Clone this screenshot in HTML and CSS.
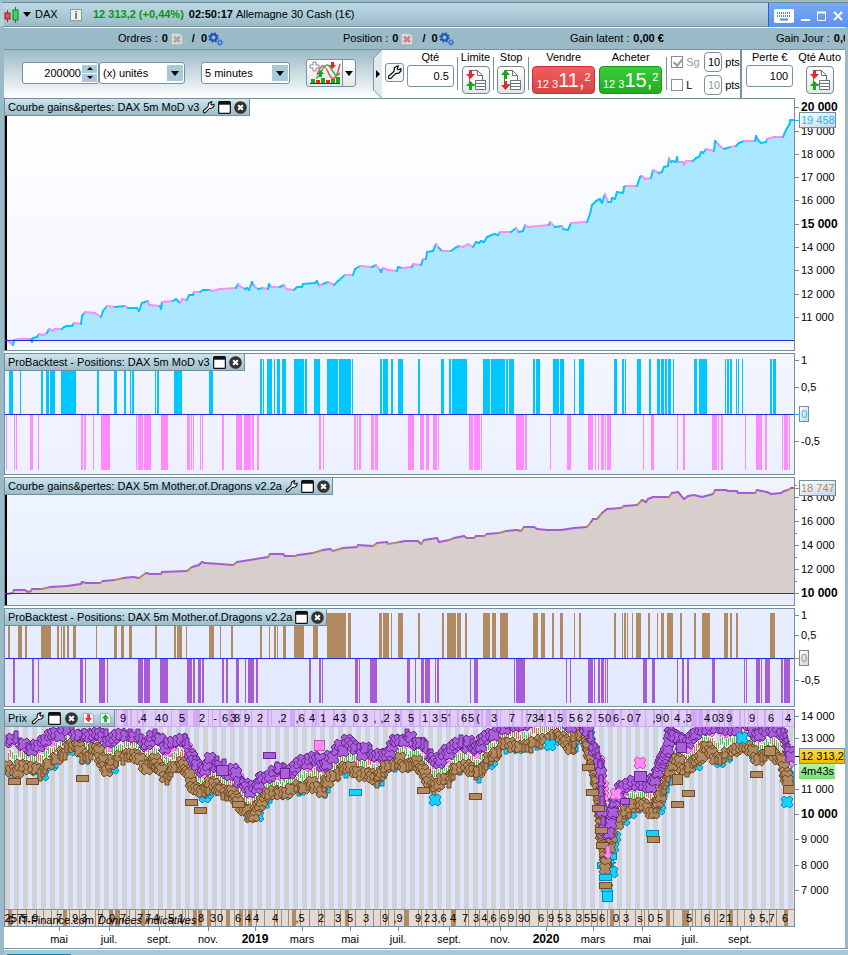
FILE: index.html
```html
<!DOCTYPE html>
<html lang="fr">
  <head>
    <meta charset="utf-8">
    <title>DAX - Allemagne 30 Cash (1€)</title>
    <link rel="stylesheet" href="styles.css">
  </head>
  <body>
    <!-- Shared icons -->
    <svg class="sprite" aria-hidden="true">
      <defs>
        <linearGradient id="tagFill" x1="0" y1="0" x2="1" y2="1">
          <stop offset="0" stop-color="#fff" />
          <stop offset="1" stop-color="#c5d3ee" />
        </linearGradient>
        <linearGradient id="priceFill" x1="0" y1="0" x2="0" y2="1">
          <stop offset="0" stop-color="#ffe03c" />
          <stop offset="1" stop-color="#f0b800" />
        </linearGradient>
        <linearGradient id="timeFill" x1="0" y1="0" x2="0" y2="1">
          <stop offset="0" stop-color="#b4f5ac" />
          <stop offset="1" stop-color="#78de78" />
        </linearGradient>
      </defs>
      <symbol id="wrench" viewBox="0 0 14 14">
        <path d="M1.5 10.5 6.5 6 7 2.5 9.5 1 10.5 1 9.5 3.5 10.5 4.5 13 3.5 13 5.500 11 7.500 8 8 3.500 12.500Q1 13.500 1.500 10.500Z" fill="#fff" stroke="#111" stroke-width="1.2" />
      </symbol>
      <symbol id="window" viewBox="0 0 14 14">
        <rect x="0.7" y="0.7" width="12.600" height="12.600" rx="1" fill="#fff" stroke="#111" stroke-width="1.3" />
        <path d="M1 1h12v3H1z" fill="#111" />
      </symbol>
      <symbol id="close" viewBox="0 0 14 14">
        <circle cx="7" cy="7" r="6.800" fill="#333" />
        <path d="M4.500 4.500l5 5M9.500 4.500l-5 5" stroke="#fff" stroke-width="2.200" />
      </symbol>
      <symbol id="sell" viewBox="0 0 14 14">
        <path d="M1.500 1.500h8l3 3v8h-11z" fill="#f4f6f8" stroke="#9aa8b2" />
        <path d="M5.500 2.500h3v4h2.500L7 11 3 6.500h2.500z" fill="#e33" />
      </symbol>
      <symbol id="buy" viewBox="0 0 14 14">
        <path d="M1.500 1.500h8l3 3v8h-11z" fill="#f4f6f8" stroke="#9aa8b2" />
        <path d="M5.500 11h3V7H11L7 2.500 3 7h2.500z" fill="#1cb11c" />
      </symbol>
      <symbol id="gears" viewBox="0 0 16 14">
        <g fill="none">
          <circle cx="5.500" cy="5.500" r="3" stroke="#1d55b8" stroke-width="2" />
          <circle cx="5.500" cy="5.500" r="4.500" stroke="#1d55b8" stroke-width="1.500" stroke-dasharray="1.767 1.767" />
          <circle cx="12" cy="10.500" r="1.800" stroke="#2f74d8" stroke-width="1.300" />
          <circle cx="12" cy="10.500" r="2.800" stroke="#2f74d8" stroke-width="1" stroke-dasharray="1.100 1.100" />
        </g>
      </symbol>
      <symbol id="cancel" viewBox="0 0 12 12">
        <path d="M.5 .5h8.500l2.500 2.500v8.500H.5z" fill="#dcdcdc" stroke="#b4bcc0" />
        <path d="M3 3.500l6 5.500M9 3.500l-6 5.500" stroke="currentColor" stroke-width="2.800" />
      </symbol>
      <symbol id="sheet" viewBox="0 0 22 22">
        <path d="M4.500 1.500h8l5 5v9h-13z" fill="#fff" stroke="#68727a" />
        <path d="M12.500 1.500v5h5" fill="none" stroke="#68727a" />
        <path d="M10.500 11.500h10v3h-10zM10.500 14.500h10v3h-10zM10.500 17.500h10v3h-10z" fill="#fff" stroke="#68727a" />
      </symbol>
      <symbol id="limit" viewBox="0 0 22 22">
        <use href="#sheet" />
        <path d="M4 1h3v4h3L5.500 10 1 5h3z" fill="#e22c2c" />
        <path d="M4 21h3v-4h3L5.500 12 1 17h3z" fill="#16a916" />
      </symbol>
      <symbol id="stop" viewBox="0 0 22 22">
        <use href="#sheet" />
        <path d="M4 10h3V6h3L5.500 1 1 6h3z" fill="#16a916" />
        <path d="M4 12h3v4h3l-4.500 5L1 16h3z" fill="#e22c2c" />
      </symbol>
    </svg>

    <div class="app">
      <header class="titlebar">
        <svg class="candles" viewBox="0 0 15 16">
          <path d="M3.500 3v12M11.500 0v16" stroke="#555" />
          <rect x="1" y="6" width="5" height="6" fill="#e55" stroke="#a11" />
          <rect x="9" y="3" width="5" height="10" fill="#3fd25c" stroke="#0a8a20" />
        </svg>
        <span class="caret"></span>
        <span class="symbol">DAX</span>
        <span class="info">i</span>
        <strong class="quote">12 313,2 (+0,44%)</strong>
        <strong class="clock">02:50:17</strong>
        <span>Allemagne 30 Cash (1€)</span>
        <div class="window-buttons">
          <button aria-label="Clavier">
            <svg width="20" height="14"><rect width="20" height="14" rx="2" fill="#fff" /><path d="M3 4h14M3 7h14" stroke="#4b86e8" stroke-width="2" stroke-dasharray="1 1" /><path d="M6 10.500h8" stroke="#4b86e8" stroke-width="2" /></svg>
          </button>
          <button aria-label="Réduire"><svg width="9" height="12"><path d="M0 10h9" stroke="#fff" stroke-width="2" /></svg></button>
          <button aria-label="Agrandir"><svg width="9" height="12"><path d="M.5 2.500h8v8h-8z" fill="none" stroke="#fff" /><path d="M0 2.500h9" stroke="#fff" stroke-width="2" /></svg></button>
          <button aria-label="Fermer"><svg width="10" height="12"><path d="M1 2l8 8M9 2l-8 8" stroke="#fff" stroke-width="2" /></svg></button>
        </div>
      </header>

      <div class="statusbar">
        <div class="status">
          <span>Ordres :</span><b>0</b><svg class="cancel grey"><use href="#cancel" /></svg>
          <b class="auto">/&nbsp; 0</b><svg class="gears"><use href="#gears" /></svg>
        </div>
        <div class="status">
          <span>Position :</span><b>0</b><svg class="cancel red"><use href="#cancel" /></svg>
          <b class="auto">/&nbsp; 0</b><svg class="gears"><use href="#gears" /></svg>
        </div>
        <div class="status"><span>Gain latent :</span><b>0,00 €</b></div>
        <div class="status"><span>Gain Jour :</span><b>0,00 €</b></div>
      </div>

      <div class="toolbar">
        <div class="view-tools">
          <div class="stepper">
            <input type="text" value="200000" aria-label="Nombre d'unités">
            <span class="steps"><button aria-label="Plus"></button><button aria-label="Moins"></button></span>
          </div>
          <div class="select units"><select aria-label="Unités"><option>(x) unités</option></select></div>
          <div class="select frame"><select aria-label="Période"><option>5 minutes</option></select></div>
          <div class="indicators">
            <button aria-label="Indicateurs">
              <svg width="32" height="24">
                <path d="M11 5l8 12 9-11-4 12-6-5z" fill="#d7f2d7" />
                <path d="M8 14C13 0 16 4 20 13S28 17 31 3" fill="none" stroke="#dc5050" stroke-width="1.500" />
                <path d="M7 17C12 16 13 4 18 4S25 20 31 12" fill="none" stroke="#40a858" stroke-width="1.500" />
                <path d="M4 1h3v3h3v3H7v3H4V7H1V4h3z" fill="#fff" stroke="#888" />
                <path d="M22 1h3v3h2l-3.500 4L20 4h2z" fill="#e22" />
                <path d="M10 16h3v-3h2l-3.500-4L8 13h2z" fill="#1a1" />
                <path d="M2 18h4v4H2zM12 17h4v5h-4zM22 18h4v4h-4zM27 16h4v6h-4z" fill="#1ca51c" />
                <path d="M7 19h4v3H7zM17 19h4v3h-4z" fill="#e02828" />
                <path d="M1 22.500h30" stroke="#22c" />
              </svg>
            </button>
            <button class="more" aria-label="Autres indicateurs"><span class="caret"></span></button>
          </div>
        </div>

        <div class="order-panel">
          <svg class="panel-edge" viewBox="0 0 9 48"><path d="M9 0 1 8V40L9 48Z" fill="#dfe9ee" /><path d="M8.500 0 .5 8V40l8 8" fill="none" stroke="#7b98a5" /><path d="M3 20v8l4-4z" /></svg>
          <button class="wrench-button" aria-label="Réglages"><svg><use href="#wrench" /></svg></button>
          <div class="field">
            <label for="qty">Qté</label>
            <input class="box" id="qty" value="0.5">
          </div>
          <div class="field ruled">
            <span>Limite</span>
            <button class="ticket" aria-label="Ordre limite"><svg><use href="#limit" /></svg></button>
          </div>
          <div class="field ruled">
            <span>Stop</span>
            <button class="ticket" aria-label="Ordre stop"><svg><use href="#stop" /></svg></button>
          </div>
          <div class="field ruled">
            <span>Vendre</span>
            <button class="price sell"><small>12 3</small><big>11,</big><sup>2</sup></button>
          </div>
          <div class="field">
            <span>Acheter</span>
            <button class="price buy"><small>12 3</small><big>15,</big><sup>2</sup></button>
          </div>
          <div class="guards">
            <div class="guard">
              <input type="checkbox" id="sg" checked disabled><label class="off" for="sg">Sg</label>
              <input class="box" value="10" aria-label="Points stop garanti"><span>pts</span>
            </div>
            <div class="guard">
              <input type="checkbox" id="limitBox"><label for="limitBox">L</label>
              <input class="box off" value="10" aria-label="Points limite"><span>pts</span>
            </div>
          </div>
          <div class="field risk">
            <label for="loss">Perte €</label>
            <input class="box" id="loss" value="100">
          </div>
          <div class="field auto-qty">
            <span>Qté Auto</span>
            <button class="ticket" aria-label="Quantité automatique"><svg><use href="#limit" /></svg></button>
          </div>
        </div>
      </div>

      <main class="panels">
        <section class="panel equity-one">
          <div class="plot" id="equityOne">
            <div class="tab">Courbe gains&amp;pertes: DAX 5m MoD v3
              <button aria-label="Réglages"><svg><use href="#wrench" /></svg></button>
              <button aria-label="Détacher"><svg><use href="#window" /></svg></button>
              <button aria-label="Fermer"><svg><use href="#close" /></svg></button>
            </div>
          </div>
          <svg class="axis" id="equityOneAxis"></svg>
        </section>
        <section class="panel positions-one">
          <div class="plot" id="positionsOne">
            <div class="tab">ProBacktest - Positions: DAX 5m MoD v3
              <button aria-label="Détacher"><svg><use href="#window" /></svg></button>
              <button aria-label="Fermer"><svg><use href="#close" /></svg></button>
            </div>
          </div>
          <svg class="axis" id="positionsOneAxis"></svg>
        </section>
        <section class="panel equity-two">
          <div class="plot" id="equityTwo">
            <div class="tab">Courbe gains&amp;pertes: DAX 5m Mother.of.Dragons v2.2a
              <button aria-label="Réglages"><svg><use href="#wrench" /></svg></button>
              <button aria-label="Détacher"><svg><use href="#window" /></svg></button>
              <button aria-label="Fermer"><svg><use href="#close" /></svg></button>
            </div>
          </div>
          <svg class="axis" id="equityTwoAxis"></svg>
        </section>
        <section class="panel positions-two">
          <div class="plot" id="positionsTwo">
            <div class="tab">ProBacktest - Positions: DAX 5m Mother.of.Dragons v2.2a
              <button aria-label="Détacher"><svg><use href="#window" /></svg></button>
              <button aria-label="Fermer"><svg><use href="#close" /></svg></button>
            </div>
          </div>
          <svg class="axis" id="positionsTwoAxis"></svg>
        </section>
        <section class="panel prices">
          <div class="plot" id="prices">
            <div class="tab">Prix
              <button aria-label="Réglages"><svg><use href="#wrench" /></svg></button>
              <button aria-label="Détacher"><svg><use href="#window" /></svg></button>
              <button aria-label="Fermer"><svg><use href="#close" /></svg></button>
              <button aria-label="Vendre"><svg><use href="#sell" /></svg></button>
              <button aria-label="Acheter"><svg><use href="#buy" /></svg></button>
            </div>
            <p class="credit">© IT-Finance.com <i>Données indicatives</i></p>
          </div>
          <svg class="axis" id="pricesAxis"></svg>
        </section>
        <div class="timeline"><svg id="timeline"></svg></div>
      </main>
      <footer class="bottombar"><span></span></footer>
    </div>
    <script src="charts.js"></script>
  </body>
</html>
```
FILE: styles.css
```css
* {
  box-sizing: border-box;
}
body {
  margin: 0;
  background: #9bbac8;
  font-family: "Liberation Sans", Arial, sans-serif;
  font-size: 11px;
  line-height: 13px;
  color: #000;
}
button {
  padding: 0;
  border: 0;
  background: none;
  font: inherit;
  color: inherit;
  cursor: pointer;
}
input,
select {
  font: inherit;
  color: inherit;
  margin: 0;
}
.sprite {
  position: absolute;
  width: 0;
  height: 0;
}
.app {
  border-top: 2px solid #9bbac8;
  overflow: hidden;
}
.caret {
  border: 4px solid transparent;
  border-top: 5px solid #000;
  border-bottom: 0;
}

/* Title bar */
.titlebar {
  display: flex;
  align-items: center;
  height: 25px;
  border-top: 1px solid #6d8a98;
  border-bottom: 1px solid #7793a0;
  border-left: 4px solid #b5d0dc;
  background: linear-gradient(#bcdbe7, #9bbac8);
}
.candles {
  width: 15px;
  height: 16px;
}
.titlebar .caret {
  margin: 0 4px;
}
.symbol {
  width: 35px;
}
.info {
  width: 12px;
  height: 12px;
  border: 1px solid #8b9aa2;
  background: #eef2f4;
  color: #666;
  line-height: 11px;
  font-weight: bold;
  text-align: center;
}
.quote {
  margin-left: 11px;
  color: #0a960a;
}
.clock {
  margin: 0 3px 0 5px;
}
.window-buttons {
  display: flex;
  align-items: center;
  gap: 7px;
  height: 24px;
  margin-left: auto;
  padding: 2px 5px 0;
  border-left: 1px solid #2c62c4;
  background: linear-gradient(#7aa9f5, #5a92ee);
}
.window-buttons svg {
  display: block;
}

/* Orders and gains */
.statusbar {
  display: grid;
  grid-template-columns: 225fr 227fr 206fr 69fr;
  height: 23px;
  margin: 0 3px 0 4px;
  padding-left: 114px;
  border-top: 1px solid #eef5f8;
  border-bottom: 1px solid #7793a0;
  overflow: hidden;
}
.status {
  display: flex;
  align-items: center;
  white-space: nowrap;
  min-width: 0;
}
.status b {
  margin-left: 4px;
}
.status .auto {
  margin-left: 9px;
}
.cancel {
  width: 12px;
  height: 12px;
  margin-left: 3px;
}
.cancel.grey {
  color: #a8a8a8;
}
.cancel.red {
  color: #cf8488;
}
.gears {
  width: 16px;
  height: 14px;
  margin-left: 1px;
}

/* Toolbar */
.toolbar {
  display: flex;
  justify-content: space-between;
  height: 48px;
  margin: 0 3px 0 4px;
  background: linear-gradient(#9bbac8, #fff);
}
.view-tools {
  display: flex;
  align-items: center;
  padding: 0 0 2px 18px;
}
.stepper,
.select select,
.box {
  height: 22px;
  border: 1px solid #7793a0;
  border-radius: 3px;
  background: #fff;
}
.stepper {
  display: flex;
  align-items: center;
  width: 77px;
}
.stepper input {
  width: 58px;
  padding: 0;
  border: 0;
  background: none;
  text-align: right;
}
.steps {
  display: grid;
  gap: 1px;
  margin-left: 1px;
}
.steps button {
  display: block;
  width: 15px;
  height: 8px;
  background: #a9cbd9;
}
.steps button::before {
  content: "";
  display: block;
  width: 0;
  margin: 0 auto;
  border: 3px solid transparent;
  border-bottom-color: #000;
  border-top: 0;
}
.steps button + button::before {
  border: 3px solid transparent;
  border-top-color: #000;
  border-bottom: 0;
}
.select {
  position: relative;
}
.select select {
  display: block;
  appearance: none;
  width: 100%;
  padding: 0 3px;
}
.select::after {
  content: "";
  position: absolute;
  top: 3px;
  right: 2px;
  width: 16px;
  height: 16px;
  background: #a9cbd9;
  pointer-events: none;
}
.select::before {
  content: "";
  position: absolute;
  z-index: 1;
  top: 9px;
  right: 6px;
  border: 4px solid transparent;
  border-top: 5px solid #000;
  border-bottom: 0;
  pointer-events: none;
}
.units {
  width: 86px;
}
.frame {
  width: 89px;
  margin: 0 16px;
}
.indicators {
  display: flex;
  height: 28px;
  border: 1px solid #7793a0;
  border-radius: 3px;
  background: linear-gradient(#fff, #e3e8ea);
}
.indicators button {
  display: flex;
  align-items: center;
  justify-content: center;
  width: 35px;
}
.indicators .more {
  width: 13px;
  border-left: 1px solid #7793a0;
}
.order-panel {
  display: flex;
  padding-right: 13px;
  background: linear-gradient(90deg, transparent 8px, #fff 8px);
}
.panel-edge {
  width: 9px;
  height: 48px;
}
.wrench-button {
  width: 19px;
  height: 19px;
  margin: 13px 3px 0 3px;
  border: 1px solid #7793a0;
  border-radius: 3px;
  background: #f4f5f6;
}
.wrench-button svg {
  display: block;
  width: 15px;
  height: 15px;
  margin: 1px;
}
.field {
  position: relative;
  display: flex;
  flex-direction: column;
  align-items: center;
  gap: 2px;
  margin-right: 4px;
  white-space: nowrap;
}
.order-panel > .field {
  padding-top: 1px;
}
.field.ruled {
  margin-left: 3px;
}
.field.ruled::before,
.guards::before {
  content: "";
  position: absolute;
  left: -4px;
  top: 7px;
  width: 1px;
  height: 33px;
  background: #7793a0;
}
.box {
  width: 47px;
  padding: 0 4px;
  text-align: right;
}
.field .box {
  margin-top: -1px;
}
.ticket {
  width: 28px;
  height: 28px;
  border: 1px solid #7d868b;
  border-radius: 4px;
  background: linear-gradient(#fff, #e4e7e9);
}
.ticket svg {
  display: block;
  width: 22px;
  height: 22px;
  margin: 2px;
}
.price {
  display: flex;
  align-items: flex-end;
  justify-content: center;
  width: 63px;
  height: 28px;
  padding-bottom: 3px;
  border-radius: 4px;
  color: #fff;
}
.price small {
  font-size: 11px;
  line-height: 12px;
}
.price big {
  font-size: 20px;
  line-height: 20px;
}
.price sup {
  align-self: flex-start;
  font-size: 11px;
  line-height: 20px;
}
.sell {
  border: 1px solid #c93333;
  background: linear-gradient(#f35d5d, #d94343);
}
.buy {
  border: 1px solid #159915;
  background: linear-gradient(#3ccb3c, #1fae1f);
}
.guards {
  position: relative;
  display: grid;
  align-content: start;
  gap: 3px;
  margin-left: 5px;
  padding-top: 2px;
  border-right: 2px solid #7793a0;
}
.guards::before {
  left: -5px;
}
.guard {
  display: grid;
  grid-template-columns: 12px 15px 18px 15px;
  align-items: center;
  gap: 3px;
}
.guard .box {
  width: 18px;
  height: 20px;
  padding: 0 1px;
  border-radius: 4px;
}
.guard .off {
  color: #999;
}
.guard input[type="checkbox"] {
  appearance: none;
  width: 12px;
  height: 12px;
  border: 1px solid #7793a0;
  background: #fff;
}
.guard input:checked::before {
  content: "";
  display: block;
  width: 4px;
  height: 7px;
  margin: 0 3px;
  border: solid #999;
  border-width: 0 2px 2px 0;
  transform: rotate(40deg);
}
.risk {
  margin: 0 2px 0 4px;
}
.auto-qty {
  margin: 0 -9px 0 3px;
}

/* Chart panels */
.panels {
  border-left: 4px solid #9bbac8;
  border-right: 3px solid #9bbac8;
  background: #fff;
}
.panel {
  display: grid;
  grid-template: 100% / 1fr 50px;
  margin-bottom: 2px;
}
.plot {
  position: relative;
  border: 1px solid #738f9c;
}
.plot > svg {
  display: block;
  position: absolute;
  width: 100%;
  height: 100%;
}
.axis {
  width: 50px;
  height: 100%;
  overflow: visible;
}
.equity-one {
  height: 253px;
}
.equity-one .plot {
  background: linear-gradient(#fff, #f3f5ff);
}
.positions-one {
  height: 122px;
}
.positions-one .plot {
  background: linear-gradient(#f3f6ff, #edf0ff);
}
.equity-two {
  height: 129px;
}
.equity-two .plot {
  background: linear-gradient(#eff4ff, #e7edff);
}
.positions-two {
  height: 99px;
}
.positions-two .plot {
  background: linear-gradient(#e8eeff, #e2e9ff);
}
.prices {
  height: 218px;
  margin: 0;
}
.prices .plot {
  background: #dce6ff;
}
.tab {
  position: relative;
  z-index: 1;
  display: flex;
  align-items: center;
  gap: 3px;
  width: max-content;
  height: 17px;
  padding: 0 2px 0 3px;
  border: solid #738f9c;
  border-width: 0 1px 1px 0;
  background: linear-gradient(#cbe6f0, #9dbcc9);
}
.tab button,
.tab svg {
  display: block;
  width: 13px;
  height: 13px;
}
.prices .tab {
  gap: 4px;
}
.credit {
  position: absolute;
  left: 2px;
  bottom: -1px;
  margin: 0;
}
.credit i {
  margin-left: 1px;
}
.timeline {
  padding-right: 50px;
}
.timeline svg {
  display: block;
  width: 100%;
  height: 21px;
}
.bottombar {
  height: 7px;
  margin-left: 4px;
  border-top: 1px solid #7793a0;
  background: linear-gradient(#fff 1px, #a9c8d5 1px);
  padding: 5px 0 0 3px;
}
.bottombar span {
  display: block;
  width: 64px;
  height: 1px;
  background: #1a7fb5;
}

/* Chart text and marks */
text {
  font-size: 11px;
}
.bold {
  font-size: 12px;
  font-weight: bold;
}
.crisp {
  shape-rendering: crispEdges;
}
```
FILE: charts.js
```js
// All chart values share one coordinate system: x from 5 to 794, y down the window.
const LEFT = 5;
const WIDTH = 789;
const BLUE = "#2a2ad8";

// "x,y" points, a trailing * marks a segment in the second colour
const equityOne =
  "7,340 13,345* 14,340 20,339* 31,339* 32,342 33,338 37,337 39,334 43,335* 47,333* 49,329 53,331* 55,329* 62,329* 64,327 67,326 72,326 74,323 81,324* 82,316 85,312 95,313* 101,317* 103,311 107,306 115,307* 125,306 128,308* 137,308 139,311 142,303 148,301 149,305* 160,306* 161,309 162,302 173,301* 176,299 180,303 182,299* 187,300* 189,295 193,295 194,292 200,292* 203,290 210,290 212,291* 220,289* 236,288* 238,284 241,287* 245,289* 247,288 249,290 252,282 254,286 258,289* 263,288 268,289* 269,284 271,287 280,287* 284,285 286,289* 294,290* 297,287 302,287 303,284 315,283 317,281 319,286 323,284* 328,282 334,285* 338,281 345,275 353,275* 355,269 360,266 372,267* 376,265 380,270* 381,272 383,268 388,270* 397,271* 398,267 402,268 412,267* 413,264 421,265* 423,259 426,259* 427,252 433,251 436,244 439,248* 442,251 451,251* 455,248 459,246 463,247* 468,244* 473,247* 476,242 479,243 481,241 484,242 487,237 494,234 498,235 500,232 511,232* 516,228 519,232* 523,231 525,225 528,227* 539,226* 549,225* 550,222 555,227* 562,226 563,229* 568,230 571,223 587,222* 590,214 592,205 596,201 600,199 602,203 605,194 608,202* 611,202 612,198 615,199 617,192 623,193 624,187 626,186 637,186* 640,177 642,176 645,179* 651,178* 653,170 659,173* 662,172 664,167 668,166 669,158 671,162* 672,161 676,162 677,157 678,162 683,162* 684,165* 686,161* 693,161* 696,158 699,157 701,152 703,153 706,149 714,151* 715,141 717,143 721,147* 724,149* 731,147 736,146* 739,143 744,141 755,141* 756,136 758,140 761,143 766,142 767,139 774,137* 783,137* 786,130 790,123 790,120 794,120";
const equityTwo =
  "7,594 13,593 14,590* 25,590 28,592 31,591 32,589* 42,589 50,587* 67,586 81,584 82,582 87,583 100,583 103,581* 115,580 123,578* 133,577 139,578 146,573* 150,574 161,574 162,572* 187,571 192,567* 199,565 202,562 205,563 220,564 233,565 237,562* 250,560 268,557 270,554* 283,554 285,556 295,556 298,555* 313,553 323,550* 330,549 333,551 343,548* 357,547 358,545* 373,546 377,543* 387,542 388,544 400,542* 405,541 418,541 421,544 424,540* 437,538 439,542 449,540 454,538* 464,536 467,538 474,538 476,536* 484,536 487,534* 499,533 506,531* 517,530 521,531 524,527* 534,527 537,529 547,530 561,530 574,528 587,527 591,522* 593,519 597,519 602,513* 607,509 621,508 624,506* 637,505 642,500* 646,502 648,499 653,497 669,497 672,493* 678,492 684,499 688,496 694,495 702,497 713,494 715,490* 726,490 728,491 737,491 738,493 755,493 757,490* 767,492 771,494 781,493 784,491 788,490 791,488* 794,488";

// Time in the market, [start, width]
const longOne = [
  [9, 4], [20, 1], [41, 2], [46, 3], [50, 5], [61, 15], [97, 2], [114, 3], [124, 2], [130, 1], [132, 2], [155, 1], [157, 2], [174, 8], [209, 4],
  [260, 2], [263, 1], [267, 5], [274, 1], [277, 3], [282, 4], [294, 10], [305, 2], [314, 6], [327, 11], [339, 12], [352, 1], [380, 2], [383, 5],
  [391, 2], [398, 5], [418, 2], [441, 3], [449, 2], [452, 15], [483, 7], [491, 14], [506, 2], [509, 5], [533, 2], [536, 4], [553, 6], [560, 4],
  [574, 1], [579, 5], [614, 3], [622, 2], [625, 1], [637, 4], [649, 2], [657, 3], [661, 3], [665, 2], [668, 3], [673, 1], [694, 3], [699, 8],
  [725, 1], [727, 2], [730, 2], [736, 1], [738, 1], [742, 1], [770, 2], [773, 3],
];
const shortOne = [
  [6, 1], [14, 1], [16, 1], [30, 3], [38, 1], [81, 2], [84, 2], [93, 1], [101, 9], [136, 1], [138, 5], [144, 7], [161, 7], [187, 3], [191, 1],
  [193, 1], [200, 1], [202, 1], [222, 2], [236, 6], [244, 7], [252, 2], [257, 2], [319, 2], [323, 1], [354, 2], [357, 1], [359, 2], [371, 3],
  [375, 3], [408, 6], [420, 4], [426, 3], [433, 4], [438, 1], [469, 4], [474, 6], [481, 1], [516, 8], [525, 2], [550, 1], [567, 4], [588, 5],
  [595, 1], [598, 1], [601, 3], [605, 1], [607, 4], [643, 1], [651, 3], [677, 1], [683, 2], [712, 5], [718, 1], [721, 2], [745, 1], [756, 6],
  [765, 2], [782, 1], [784, 4], [789, 1],
];
const longTwo = [
  [8, 2], [18, 4], [25, 2], [41, 10], [57, 2], [61, 1], [63, 2], [67, 2], [73, 3], [96, 1], [114, 3], [121, 3], [129, 3], [155, 2], [174, 2],
  [177, 5], [186, 1], [209, 5], [220, 1], [231, 2], [260, 2], [269, 1], [274, 2], [277, 1], [283, 3], [294, 10], [313, 5], [327, 19], [348, 3],
  [379, 3], [383, 6], [391, 1], [398, 5], [418, 2], [442, 2], [447, 9], [457, 4], [465, 2], [483, 7], [492, 4], [500, 8], [533, 5], [541, 4],
  [552, 2], [560, 3], [574, 1], [579, 2], [614, 2], [622, 1], [624, 2], [627, 1], [632, 1], [636, 5], [648, 2], [657, 1], [661, 3], [667, 6],
  [680, 2], [694, 2], [702, 8], [724, 4], [730, 2], [736, 2], [770, 5],
];
const shortTwo = [
  [13, 2], [32, 2], [38, 1], [80, 3], [85, 1], [99, 6], [107, 1], [138, 5], [144, 6], [160, 8], [187, 5], [193, 2], [198, 3], [202, 2], [222, 2],
  [226, 2], [236, 3], [245, 1], [248, 6], [256, 2], [309, 2], [319, 2], [322, 1], [355, 3], [359, 1], [370, 7], [407, 3], [415, 1], [421, 3],
  [425, 5], [435, 1], [437, 2], [470, 1], [474, 4], [514, 1], [516, 9], [566, 1], [570, 1], [588, 5], [594, 1], [598, 2], [601, 3], [605, 1],
  [607, 1], [643, 4], [652, 3], [677, 1], [682, 2], [687, 2], [712, 3], [744, 1], [746, 1], [756, 4], [761, 1], [765, 5], [781, 2], [784, 6],
];

// Centre lines of the short (upper) and long (lower) markers
const upper =
  "8,738 20,743 32,747 43,743 53,738 63,733 72,731 80,733 87,738 97,730 103,737 108,743 117,738 130,733 138,737 147,745 155,738 165,750 173,745 182,741 190,752 197,765 203,772 210,762 217,765 227,773 233,772 242,782 250,793 257,787 263,777 277,772 287,773 295,767 307,763 317,760 322,768 330,758 340,750 350,743 362,753 370,753 377,758 387,752 397,740 407,740 418,743 426,752 436,765 444,757 452,750 461,742 469,745 477,752 484,738 494,732 502,728 512,725 524,724 540,718 562,718 571,728 580,720 587,730 594,748 599,763 601,778 602,822 607,842 615,802 624,785 641,785 651,785 657,777 662,760 669,742 671,730 681,745 691,742 696,735 707,728 724,730 737,727 745,718 757,737 774,730 782,732 787,748 792,762";
const lower =
  "7,768 15,773 20,767 33,768 40,773 45,765 57,758 67,748 77,745 82,757 88,755 97,747 102,760 107,770 113,762 123,757 132,752 140,760 147,767 155,758 162,772 167,777 173,767 182,762 188,772 193,785 202,795 210,783 217,785 223,795 230,790 238,805 247,812 252,818 260,805 267,795 277,793 287,790 300,787 312,785 322,790 328,780 338,773 348,767 358,773 370,773 377,783 383,768 400,760 408,767 417,762 423,772 431,788 439,782 449,780 457,767 466,763 476,775 486,762 496,752 506,743 524,748 534,742 552,738 561,735 571,748 577,735 586,733 589,752 594,768 597,785 600,802 601,832 604,848 607,868 611,840 615,825 624,815 631,807 641,803 654,812 659,798 664,785 671,768 677,758 687,772 697,758 707,747 717,760 727,752 744,745 759,760 771,752 781,758 786,775 789,787";

const colours = {
  tan: ["#b08a62", "#74491f"],
  purple: ["#aa60da", "#6a2594"],
  cyan: ["#14d2ff", "#0088c2"],
  pink: ["#ff8cf4", "#cc4fc4"],
};
// kind, colour, x, y, width, height
const loose = [
  ["box", "cyan", 349, 789, 12, 6], ["box", "cyan", 646, 830, 12, 6], ["box", "cyan", 597, 862, 7, 6], ["box", "cyan", 610, 853, 6, 6],
  ["x", "cyan", 612, 872], ["x", "tan", 606, 863], ["x", "tan", 605, 869], ["box", "cyan", 599, 874, 12, 6], ["x", "cyan", 607, 888],
  ["box", "tan", 599, 882, 12, 6], ["box", "cyan", 602, 891, 10, 10], ["x", "cyan", 435, 800], ["x", "cyan", 550, 745], ["x", "cyan", 787, 802],
  ["x", "cyan", 742, 738], ["box", "tan", 8, 778, 12, 6], ["box", "tan", 26, 778, 12, 6], ["box", "tan", 76, 775, 12, 6], ["box", "tan", 185, 799, 12, 6],
  ["box", "tan", 194, 807, 12, 6], ["box", "tan", 232, 801, 12, 6], ["box", "tan", 417, 787, 12, 6], ["box", "tan", 469, 793, 12, 6],
  ["box", "tan", 582, 764, 12, 6], ["box", "tan", 586, 789, 12, 6], ["box", "tan", 592, 805, 12, 6], ["box", "tan", 595, 827, 12, 6],
  ["box", "tan", 596, 842, 12, 6], ["box", "tan", 647, 836, 12, 6], ["box", "tan", 671, 801, 12, 6], ["box", "tan", 682, 790, 12, 6],
  ["box", "tan", 750, 771, 12, 6], ["box", "tan", 672, 774, 10, 10], ["box", "tan", 764, 746, 11, 9], ["box", "tan", 783, 785, 11, 8],
  ["box", "purple", 263, 752, 12, 6], ["box", "purple", 634, 771, 12, 10], ["box", "purple", 620, 798, 9, 6], ["box", "purple", 216, 765, 12, 10],
  ["box", "purple", 676, 742, 10, 10], ["box", "purple", 280, 768, 9, 10], ["box", "pink", 314, 740, 10, 10], ["x", "pink", 640, 763],
  ["x", "pink", 616, 794], ["down", "pink", 608, 852],
];

const topDigits =
  "123:9 142:,4 158:4 165:0 182:5 202:2 215:- 225:6 233:3 237:8 247:9 260:2 282:,2 300:,6 312:4 323:1 336:4 343:3 356:0 365:3 375:, 385:,2 397:3 411:5 425:1 435:3 444:5 449:' 464:6 471:5 478:( 494:3 512:7 529:7 535:3 541:4 550:1 560:5 572:5 580:6 589:2 601:5 608:0 616:6 623:- 630:0 638:7 657:,9 666:0 677:4 687:,3 707:4 715:0 721:3 729:9 752:9 771:6 788:4";
const bottomDigits =
  "9:2, 17:57 26:5, 35:9 59:7 75:9 84:3 100:7 112:0 123:7 140:7 148:7 156:4 171:5 181:1 201:8 213:3 220:0 238:6 248:4 256:4 275:4 300:,5 321:2 338:3 350:5 366:3 385:9 398:,9 418:9 427:2 439:3,6 453:4 465:7 476:3 489:4,6 503:6 511:9 521:9 527:0 541:6 551:9 560:5 568:3 579:3 587:5 594:5 602:6 616:0 626:3 640:s 651:0 660:5 689:5 707:6 722:2 729:1 752:9 767:5,7 785:6";

function parse(line) {
  return line.split(" ").map((p) => {
    const [x, y] = p.replace("*", "").split(",").map(Number);
    return { x, y, second: p.endsWith("*") };
  });
}

// Small repeatable generator so the chart is the same on each load
let seed = 11;
function random() {
  seed = (seed * 16807) % 2147483647;
  return seed / 2147483647;
}

function addPlot(id, top, height, content) {
  document.getElementById(id).insertAdjacentHTML(
    "afterbegin",
    `<svg viewBox="${LEFT} ${top} ${WIDTH} ${height}" preserveAspectRatio="none">${content}</svg>`
  );
}

function rect(x, y, w, h, fill) {
  return `<rect class="crisp" x="${x}" y="${y}" width="${w}" height="${h}" fill="${fill}"/>`;
}

function drawEquity(id, top, height, data, base, fill, first, second) {
  const pts = parse(data);
  const area = pts.map((p) => `${p.x},${p.y}`).join(" ");
  let svg = `<polygon points="7,${base} ${area} 794,${base}" fill="${fill}"/>`;
  for (let i = 1; i < pts.length; i++) {
    const a = pts[i - 1];
    const b = pts[i];
    svg += `<path d="M${a.x} ${a.y}L${b.x} ${b.y}" stroke="${b.second ? second : first}" stroke-width="2" stroke-linecap="round"/>`;
  }
  svg += rect(5, top, 2, height, "#000") + rect(5, base, WIDTH, 1, BLUE);
  addPlot(id, top, height, svg);
}

function drawPositions(id, top, height, longs, shorts, y, up, down) {
  let svg = "";
  longs.forEach(([x, w]) => (svg += rect(x, y[0], w, y[1] - y[0], up)));
  shorts.forEach(([x, w]) => (svg += rect(x, y[1], w, y[2] - y[1], down)));
  svg += rect(5, y[1], WIDTH, 1, BLUE);
  addPlot(id, top, height, svg);
}

const shapes = {
  x: "M-6-3-3-6 0-4 3-6 6-3 4 0 6 3 3 6 0 4-3 6-6 3-4 0Z",
  up: "M0-7 5-2 2-2 2 6-2 6-2-2-5-2Z",
  down: "M0 7 5 2 2 2 2-6-2-6-2 2-5 2Z",
};

function mark(kind, colour, x, y, w, h) {
  const [fill, stroke] = colours[colour];
  if (kind === "box") {
    return `<rect x="${x + 0.5}" y="${y + 0.5}" width="${w}" height="${h}" fill="${fill}" stroke="${stroke}"/>`;
  }
  return `<path transform="translate(${x} ${y})" d="${shapes[kind]}" fill="${fill}" stroke="${stroke}"/>`;
}

// Walk along a line in even steps
function walk(line, step, each) {
  const pts = parse(line);
  for (let i = 1; i < pts.length; i++) {
    const a = pts[i - 1];
    const b = pts[i];
    const n = Math.max(1, Math.round(Math.hypot(b.x - a.x, b.y - a.y) / step));
    for (let k = 0; k < n; k++) {
      each(Math.round(a.x + ((b.x - a.x) * k) / n), Math.round(a.y + ((b.y - a.y) * k) / n), (b.y - a.y) / (b.x - a.x || 1));
    }
  }
}

function levelAt(pts, x) {
  const i = Math.max(1, pts.findIndex((p) => p.x >= x));
  const a = pts[i - 1];
  const b = pts[i];
  return a.y + ((b.y - a.y) * (x - a.x)) / (b.x - a.x);
}

function drawPrices() {
  let svg = "";
  for (let x = 5; x < 794; x += 9) {
    svg += rect(x, 710, 5, 200, "#d2d2d4");
  }

  walk(lower, 5, (x, y) => {
    if (random() < 0.4) svg += mark(random() < 0.5 ? "x" : "up", "cyan", x + 3, y + 2);
  });
  walk(upper, 5, (x, y) => {
    if (random() < 0.35) svg += mark(random() < 0.5 ? "x" : "down", "pink", x + 2, y + 3);
  });

  const up = parse(upper);
  const low = parse(lower);
  for (let x = 8; x < 789; x += 2) {
    const y = Math.round((levelAt(up, x) + levelAt(low, x)) / 2 + random() * 6 - 3);
    svg += rect(x, y - 4, 2, 9, "#eef0f0");
    svg += rect(x, y - 3, 1, 7, random() < 0.6 ? "#3fcb3f" : "#e86060");
  }

  walk(lower, 4, (x, y, slope) => {
    const shift = Math.round(random() * 6 - 3);
    svg += mark(slope < 0 && random() < 0.5 ? "up" : "x", "tan", x, y + shift);
  });
  walk(upper, 4, (x, y, slope) => {
    const shift = Math.round(random() * 8 - 5);
    if (x > 600 && x < 614 && y > 790 && random() < 0.7) return;
    svg += mark(slope > 0 && random() < 0.5 ? "down" : "x", "purple", x, y + shift);
  });
  loose.forEach((m) => (svg += mark(...m)));

  // Gain per trade strips
  svg += rect(5, 710, WIDTH, 17, "#dfccfa") + rect(5, 726, WIDTH, 1, "#cfa8f2");
  svg += rect(5, 909, WIDTH, 17, "#e1dad6") + rect(5, 909, WIDTH, 1, "#b08a62");
  for (let x = 116; x < 792; x += 3 + Math.floor(random() * 8)) {
    svg += rect(x, 710, random() < 0.2 ? 5 : 1 + Math.floor(random() * 2), 17, "#d0a8f6");
  }
  for (let x = 8; x < 792; x += 3 + Math.floor(random() * 8)) {
    svg += rect(x, 910, random() < 0.15 ? 4 : 1, 16, "#b08a62");
  }
  addPlot("prices", 710, 216, svg);

  const digits = (list, y) =>
    list
      .split(" ")
      .map((d) => d.split(":"))
      .map(([x, t]) => `<text x="${((x - LEFT) / WIDTH) * 100}%" y="${y}" text-anchor="middle">${t}</text>`)
      .join("");
  document
    .querySelector("#prices > svg")
    .insertAdjacentHTML("afterend", `<svg>${digits(topDigits, 12)}${digits(bottomDigits, 212)}</svg>`);
}

// labels: [y, text, bold]
function drawAxis(id, top, labels, minor, tag) {
  let svg = "";
  labels.forEach(([y, text, bold]) => {
    svg += rect(0, y - top, 4, 1, "#738f9c");
    svg += `<text x="6" y="${y - top + 4}" class="${bold ? "bold" : ""}">${text}</text>`;
  });
  minor.forEach((y) => (svg += rect(0, y - top, 2, 1, "#738f9c")));
  if (tag) {
    const [y, text, width, colour] = tag;
    svg += rect(0, y - top, 4, 1, colour);
    svg += `<rect x="4.500" y="${y - top - 7.5}" width="${width}" height="15" fill="url(#tagFill)" stroke="#738f9c"/>`;
    svg += `<text x="6" y="${y - top + 4}" fill="${colour}">${text}</text>`;
  }
  document.getElementById(id).innerHTML = svg;
}

drawEquity("equityOne", 99, 251, equityOne, 340, "#a9e8ff", "#0cc2fa", "#fb8cf8");
drawPositions("positionsOne", 354, 120, longOne, shortOne, [359, 414, 470], "#00c8ff", "#ff8cff");
drawEquity("equityTwo", 478, 127, equityTwo, 593, "#d8cecc", "#a45cd4", "#b08a62");
drawPositions("positionsTwo", 609, 97, longTwo, shortTwo, [613, 658, 703], "#b08a60", "#a65cd6");
drawPrices();

drawAxis("equityOneAxis", 98, [
  [107, "20 000", true], [131, "19 000"], [154, "18 000"], [177, "17 000"], [200, "16 000"],
  [224, "15 000", true], [247, "14 000"], [270, "13 000"], [294, "12 000"], [317, "11 000"],
], [], [120, "19 458", 36, "#0cc2fa"]);
drawAxis("positionsOneAxis", 353, [[360, "1"], [387, "0,5"], [441, "-0,5"]], [], [414, "0", 9, "#0cc2fa"]);
drawAxis("equityTwoAxis", 477, [
  [497, "18 000"], [521, "16 000"], [545, "14 000"], [569, "12 000"], [593, "10 000", true],
], [485, 509, 533, 557, 581], [488, "18 747", 36, "#b08a62"]);
drawAxis("positionsTwoAxis", 608, [[615, "1"], [635, "0,5"], [680, "-0,5"]], [], [658, "0", 9, "#b08a62"]);
drawAxis("pricesAxis", 709, [
  [716, "14 000"], [738, "13 000"], [789, "11 000"], [814, "10 000", true], [839, "9 000"], [865, "8 000"], [890, "7 000"],
], [764]);
document.getElementById("pricesAxis").insertAdjacentHTML(
  "beforeend",
  `${rect(0, 47, 5, 1, "#000")}
   <rect x="4.500" y="39.500" width="45" height="15" fill="url(#priceFill)" stroke="#738f9c"/>
   <text x="6" y="51">12 313,2</text>
   <rect x="4" y="55" width="36" height="15" fill="url(#timeFill)"/>
   <text x="6" y="66">4m43s</text>`
);

const months = [
  [59, "mai"], [109, "juil."], [159, "sept."], [208, "nov."], [255, "2019", true], [302, "mars"], [350, "mai"], [398, "juil."],
  [449, "sept."], [500, "nov."], [546, "2020", true], [593, "mars"], [642, "mai"], [690, "juil."], [740, "sept."],
];
document.getElementById("timeline").innerHTML = months
  .map(([x, text, bold]) => {
    const at = ((x - 4) / 791) * 100 + "%";
    return `<rect x="${at}" y="0" width="1" height="4" fill="#738f9c"/><text x="${at}" y="16" text-anchor="middle" class="${bold ? "bold" : ""}">${text}</text>`;
  })
  .join("");
```
